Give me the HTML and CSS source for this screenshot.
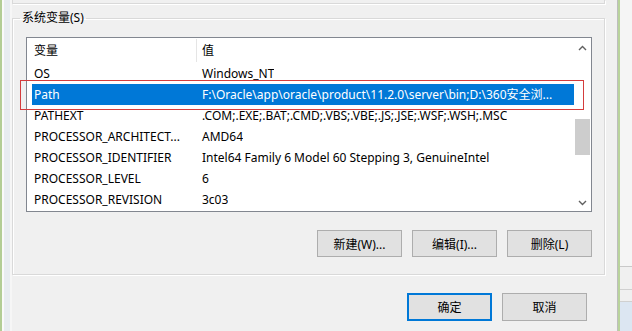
FILE: index.html
```html
<!DOCTYPE html>
<html>
<head>
<meta charset="utf-8">
<title>环境变量</title>
<link rel="stylesheet" href="styles.css">
</head>
<body>

<div class="screen">

  <div class="edge-left"></div>

  <div class="dialog">

    <div class="prev-group"></div>

    <fieldset class="group">
      <legend>系统变量(S)</legend>

      <div class="listview">
        <div class="list-main">
          <div class="list-head">
            <div class="col-name">变量</div>
            <div class="col-value">值</div>
          </div>
          <div class="row"><div class="col-name">OS</div><div class="col-value">Windows_NT</div></div>
          <div class="row selected"><div class="col-name">Path</div><div class="col-value">F:\Oracle\app\oracle\product\11.2.0\server\bin;D:\360安全浏...</div></div>
          <div class="row"><div class="col-name">PATHEXT</div><div class="col-value">.COM;.EXE;.BAT;.CMD;.VBS;.VBE;.JS;.JSE;.WSF;.WSH;.MSC</div></div>
          <div class="row"><div class="col-name">PROCESSOR_ARCHITECT...</div><div class="col-value">AMD64</div></div>
          <div class="row"><div class="col-name">PROCESSOR_IDENTIFIER</div><div class="col-value">Intel64 Family 6 Model 60 Stepping 3, GenuineIntel</div></div>
          <div class="row"><div class="col-name">PROCESSOR_LEVEL</div><div class="col-value">6</div></div>
          <div class="row"><div class="col-name">PROCESSOR_REVISION</div><div class="col-value">3c03</div></div>
        </div>

        <div class="scrollbar">
          <div class="scroll-btn">
            <svg width="9" height="6" viewBox="0 0 9 6"><path d="M1 5 L4.5 1.5 L8 5" fill="none" stroke="#606060" stroke-width="1.4"/></svg>
          </div>
          <div class="track"><div class="thumb"></div></div>
          <div class="scroll-btn down">
            <svg width="9" height="6" viewBox="0 0 9 6"><path d="M1 1 L4.5 4.5 L8 1" fill="none" stroke="#606060" stroke-width="1.4"/></svg>
          </div>
        </div>

        <!-- red box drawn over the Path row -->
        <div class="mark"></div>
      </div>

      <div class="group-buttons">
        <button class="btn">新建(W)...</button>
        <button class="btn">编辑(I)...</button>
        <button class="btn">删除(L)</button>
      </div>
    </fieldset>

    <div class="dialog-buttons">
      <button class="btn btn-ok default">确定</button>
      <button class="btn btn-ok">取消</button>
    </div>

  </div>

  <div class="behind">
    <div class="behind-top"></div>
    <div class="behind-row"></div>
    <div class="behind-row short"></div>
    <div class="behind-blue"></div>
  </div>

</div>

</body>
</html>
```

FILE: styles.css
```css
html, body {
    margin: 0;
    padding: 0;
}

body {
    width: 632px;
    height: 331px;
    overflow: hidden;
    background-color: #f0f0f0;
    font-family: "Noto Sans", "Noto Sans CJK SC", sans-serif;
    font-size: 12px;
    color: #000;
}

.screen {
    display: flex;
    height: 331px;
}

.edge-left {
    width: 4px;
    flex: none;
    border-left: 2px solid #b3cd95;
    border-right: 2px solid #f6f6f6;
    background-color: #e8ecf0;
    box-shadow: inset 2px 0 0 #fafafa;
    padding-left: 4px;
}

.dialog {
    width: 605px;
    flex: none;
    border-right: 1px solid #bdbdbd;
}

.prev-group {
    width: 593px;
    height: 4px;
    box-sizing: border-box;
    border: 1px solid #d9d9d9;
    border-top: none;
    box-shadow: 1px 1px 0 #fff;
}

.group {
    box-sizing: border-box;
    width: 593px;
    margin: 6px 0 0 0;
    padding: 11px 12px 17px 13px;
    min-width: 0;
    border: 1px solid #d9d9d9;
    box-shadow: 1px 1px 0 #fff, inset 1px 1px 0 #fff;
}

.group legend {
    padding: 0 2px;
    margin-left: -6px;
    line-height: 16px;
}

.listview {
    position: relative;
    display: flex;
    height: 175px;
    box-sizing: border-box;
    border: 1px solid #828790;
    background-color: #fff;
}

.list-main {
    flex: 1;
    min-width: 0;
}

.list-head {
    display: flex;
    height: 25px;
}

.list-head .col-name {
    width: 162px;
    padding: 2px 0 0 7px;
    border-right: 1px solid #e5e5e5;
    margin: 1px 0 1px 0;
    line-height: 20px;
}

.list-head .col-value {
    padding: 3px 0 0 5px;
    line-height: 20px;
}

.row {
    display: flex;
    height: 21px;
    line-height: 21px;
    margin-left: 5px;
    white-space: nowrap;
}

.row .col-name {
    width: 163px;
    padding-left: 2px;
    overflow: hidden;
}

.row .col-value {
    padding-left: 5px;
    overflow: hidden;
}

.row.selected {
    background-color: #0078d7;
    color: #fff;
}

.scrollbar {
    width: 17px;
    flex: none;
    display: flex;
    flex-direction: column;
    background-color: #fff;
}

.scroll-btn {
    height: 20px;
    display: flex;
    align-items: center;
    justify-content: center;
}

.scroll-btn.down {
    align-items: flex-end;
    padding-bottom: 5px;
    height: 15px;
}

.track {
    flex: 1;
    padding: 61px 1px 0 1px;
}

.thumb {
    height: 36px;
    background-color: #cdcdcd;
}

.mark {
    position: absolute;
    left: -7px;
    top: 42px;
    width: 564px;
    height: 30px;
    box-sizing: border-box;
    border: 1px solid #d43c3c;
}

.group-buttons {
    display: flex;
    justify-content: flex-end;
    gap: 10px;
    margin-top: 18px;
}

.btn {
    width: 85px;
    height: 27px;
    box-sizing: border-box;
    border: 1px solid #adadad;
    background-color: #e1e1e1;
    font-family: "Noto Sans", "Noto Sans CJK SC", sans-serif;
    font-size: 12px;
    color: #000;
    padding: 0;
}

.dialog-buttons {
    display: flex;
    justify-content: flex-end;
    gap: 10px;
    margin-top: 18px;
    padding-right: 30px;
}

.btn-ok {
    height: 28px;
}

.default {
    border: 2px solid #0078d7;
}

.behind {
    flex: 1;
    display: flex;
    flex-direction: column;
    border-left: 2px solid #b9d39c;
    background-color: #f5f5f5;
}

.behind-top {
    height: 266px;
    border-bottom: 1px solid #c9c9c9;
}

.behind-row {
    height: 22px;
    border-bottom: 1px solid #d0d0d0;
    background-color: #f0f0f0;
}

.behind-row.short {
    height: 11px;
}

.behind-blue {
    flex: 1;
    background-color: #dce6f2;
}
```
